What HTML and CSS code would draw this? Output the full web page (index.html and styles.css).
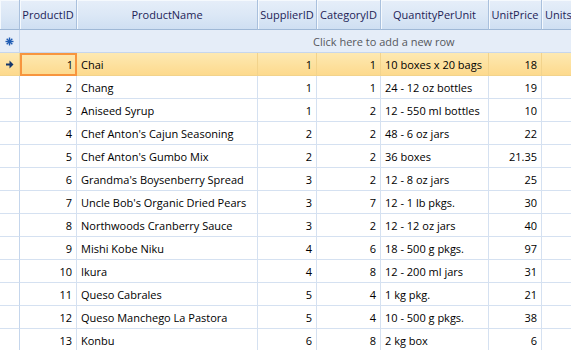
FILE: index.html
```html
<!DOCTYPE html>
<html lang="en">
<head>
  <meta charset="UTF-8">
  <title>Products Grid</title>
  <link rel="stylesheet" href="styles.css">
</head>
<body>

  <div class="grid">
    <!-- Header -->
    <div class="row header-row">
      <div class="cell rh"></div>
      <div class="cell c-id">ProductID</div>
      <div class="cell c-name">ProductName</div>
      <div class="cell c-sup">SupplierID</div>
      <div class="cell c-cat">CategoryID</div>
      <div class="cell c-qty">QuantityPerUnit</div>
      <div class="cell c-price">UnitPrice</div>
      <div class="cell c-units">Units</div>
    </div>

    <!-- New row -->
    <div class="row new-row">
      <div class="cell rh">
        <svg width="9" height="9" viewBox="0 0 9 9">
          <g stroke="#1f5cb3" stroke-width="1.4">
            <line x1="4.5" y1="0.5" x2="4.5" y2="8.5"/>
            <line x1="0.5" y1="4.5" x2="8.5" y2="4.5"/>
            <line x1="1.7" y1="1.7" x2="7.3" y2="7.3"/>
            <line x1="7.3" y1="1.7" x2="1.7" y2="7.3"/>
          </g>
        </svg>
      </div>
      <div class="new-text">Click here to add a new row</div>
    </div>

    <!-- Data rows -->
    <div class="row data-row current">
      <div class="cell rh">
        <svg width="8" height="9" viewBox="0 0 8 9">
          <path d="M0 3.5h3.5V0.5L7.5 4.5 3.5 8.5V5.5H0z" fill="#15366b"/>
        </svg>
      </div>
      <div class="cell c-id num active">1</div>
      <div class="cell c-name">Chai</div>
      <div class="cell c-sup num">1</div>
      <div class="cell c-cat num">1</div>
      <div class="cell c-qty">10 boxes x 20 bags</div>
      <div class="cell c-price num">18</div>
      <div class="cell c-units"></div>
    </div>
    <div class="row data-row">
      <div class="cell rh"></div>
      <div class="cell c-id num">2</div>
      <div class="cell c-name">Chang</div>
      <div class="cell c-sup num">1</div>
      <div class="cell c-cat num">1</div>
      <div class="cell c-qty">24 - 12 oz bottles</div>
      <div class="cell c-price num">19</div>
      <div class="cell c-units"></div>
    </div>
    <div class="row data-row">
      <div class="cell rh"></div>
      <div class="cell c-id num">3</div>
      <div class="cell c-name">Aniseed Syrup</div>
      <div class="cell c-sup num">1</div>
      <div class="cell c-cat num">2</div>
      <div class="cell c-qty">12 - 550 ml bottles</div>
      <div class="cell c-price num">10</div>
      <div class="cell c-units"></div>
    </div>
    <div class="row data-row">
      <div class="cell rh"></div>
      <div class="cell c-id num">4</div>
      <div class="cell c-name">Chef Anton's Cajun Seasoning</div>
      <div class="cell c-sup num">2</div>
      <div class="cell c-cat num">2</div>
      <div class="cell c-qty">48 - 6 oz jars</div>
      <div class="cell c-price num">22</div>
      <div class="cell c-units"></div>
    </div>
    <div class="row data-row">
      <div class="cell rh"></div>
      <div class="cell c-id num">5</div>
      <div class="cell c-name">Chef Anton's Gumbo Mix</div>
      <div class="cell c-sup num">2</div>
      <div class="cell c-cat num">2</div>
      <div class="cell c-qty">36 boxes</div>
      <div class="cell c-price num">21.35</div>
      <div class="cell c-units"></div>
    </div>
    <div class="row data-row">
      <div class="cell rh"></div>
      <div class="cell c-id num">6</div>
      <div class="cell c-name">Grandma's Boysenberry Spread</div>
      <div class="cell c-sup num">3</div>
      <div class="cell c-cat num">2</div>
      <div class="cell c-qty">12 - 8 oz jars</div>
      <div class="cell c-price num">25</div>
      <div class="cell c-units"></div>
    </div>
    <div class="row data-row">
      <div class="cell rh"></div>
      <div class="cell c-id num">7</div>
      <div class="cell c-name">Uncle Bob's Organic Dried Pears</div>
      <div class="cell c-sup num">3</div>
      <div class="cell c-cat num">7</div>
      <div class="cell c-qty">12 - 1 lb pkgs.</div>
      <div class="cell c-price num">30</div>
      <div class="cell c-units"></div>
    </div>
    <div class="row data-row">
      <div class="cell rh"></div>
      <div class="cell c-id num">8</div>
      <div class="cell c-name">Northwoods Cranberry Sauce</div>
      <div class="cell c-sup num">3</div>
      <div class="cell c-cat num">2</div>
      <div class="cell c-qty">12 - 12 oz jars</div>
      <div class="cell c-price num">40</div>
      <div class="cell c-units"></div>
    </div>
    <div class="row data-row">
      <div class="cell rh"></div>
      <div class="cell c-id num">9</div>
      <div class="cell c-name">Mishi Kobe Niku</div>
      <div class="cell c-sup num">4</div>
      <div class="cell c-cat num">6</div>
      <div class="cell c-qty">18 - 500 g pkgs.</div>
      <div class="cell c-price num">97</div>
      <div class="cell c-units"></div>
    </div>
    <div class="row data-row">
      <div class="cell rh"></div>
      <div class="cell c-id num">10</div>
      <div class="cell c-name">Ikura</div>
      <div class="cell c-sup num">4</div>
      <div class="cell c-cat num">8</div>
      <div class="cell c-qty">12 - 200 ml jars</div>
      <div class="cell c-price num">31</div>
      <div class="cell c-units"></div>
    </div>
    <div class="row data-row">
      <div class="cell rh"></div>
      <div class="cell c-id num">11</div>
      <div class="cell c-name">Queso Cabrales</div>
      <div class="cell c-sup num">5</div>
      <div class="cell c-cat num">4</div>
      <div class="cell c-qty">1 kg pkg.</div>
      <div class="cell c-price num">21</div>
      <div class="cell c-units"></div>
    </div>
    <div class="row data-row">
      <div class="cell rh"></div>
      <div class="cell c-id num">12</div>
      <div class="cell c-name">Queso Manchego La Pastora</div>
      <div class="cell c-sup num">5</div>
      <div class="cell c-cat num">4</div>
      <div class="cell c-qty">10 - 500 g pkgs.</div>
      <div class="cell c-price num">38</div>
      <div class="cell c-units"></div>
    </div>
    <div class="row data-row">
      <div class="cell rh"></div>
      <div class="cell c-id num">13</div>
      <div class="cell c-name">Konbu</div>
      <div class="cell c-sup num">6</div>
      <div class="cell c-cat num">8</div>
      <div class="cell c-qty">2 kg box</div>
      <div class="cell c-price num">6</div>
      <div class="cell c-units"></div>
    </div>
  </div>

</body>
</html>
```

FILE: styles.css
```css
body {
  margin: 0;
  padding: 0;
  background-color: #ffffff;
  font-family: "Open Sans", "Noto Sans", sans-serif;
  font-size: 11px;
  color: #000000;
  overflow: hidden;
}

.grid {
  width: 571px;
  overflow: hidden;
}

.row {
  display: flex;
  height: 23px;
}

.cell {
  box-sizing: border-box;
  flex: none;
  display: flex;
  align-items: center;
  padding: 0 4px;
  white-space: nowrap;
  overflow: hidden;
  border-right: 1px solid #d5e1f1;
  border-bottom: 1px solid #d5e1f1;
}

/* column widths */
.rh { width: 20px; padding: 0; justify-content: center; }
.c-id { width: 57px; }
.c-name { width: 181px; }
.c-sup { width: 59px; }
.c-cat { width: 64px; }
.c-qty { width: 108px; }
.c-price { width: 53px; }
.c-units { flex: 1; border-right: none; }

.num {
  justify-content: flex-end;
}

/* Header */
.header-row {
  height: 30px;
}

.header-row .cell {
  justify-content: center;
  color: #1d2356;
  background: linear-gradient(to bottom, #e6eef9 0%, #dce8f6 50%, #cfdff2 100%);
  border-right: 1px solid #a9c0dd;
  border-bottom: 1px solid #9fb8d6;
  box-shadow: inset 1px 1px 0 #f5f9fd;
}

.header-row .c-units {
  justify-content: flex-start;
  padding: 0 0 0 3px;
  border-right: none;
}

/* New row */
.new-row {
  background-color: #e5edf8;
}

.new-row .rh {
  border-right: 1px solid #c6d6ec;
  border-bottom: 1px solid #c6d6ec;
}

.new-text {
  flex: 1;
  box-sizing: border-box;
  padding-left: 293px;
  display: flex;
  align-items: center;
  color: #55585d;
  border-bottom: 1px solid #c6d6ec;
}

/* Data rows */
.data-row .rh {
  background-color: #ffffff;
  border-right: 1px solid #c5d6ec;
}

.current {
  background: linear-gradient(to bottom, #fde9b2 0%, #fdd98c 100%);
}

.current .cell {
  border-right-color: #f2d38c;
  border-bottom-color: #f2d38c;
}

.current .rh {
  background: linear-gradient(to bottom, #fde9b2 0%, #fdd98c 100%);
}

.current .active {
  border: 2px solid #f7953e;
  padding-right: 2px;
}
```
